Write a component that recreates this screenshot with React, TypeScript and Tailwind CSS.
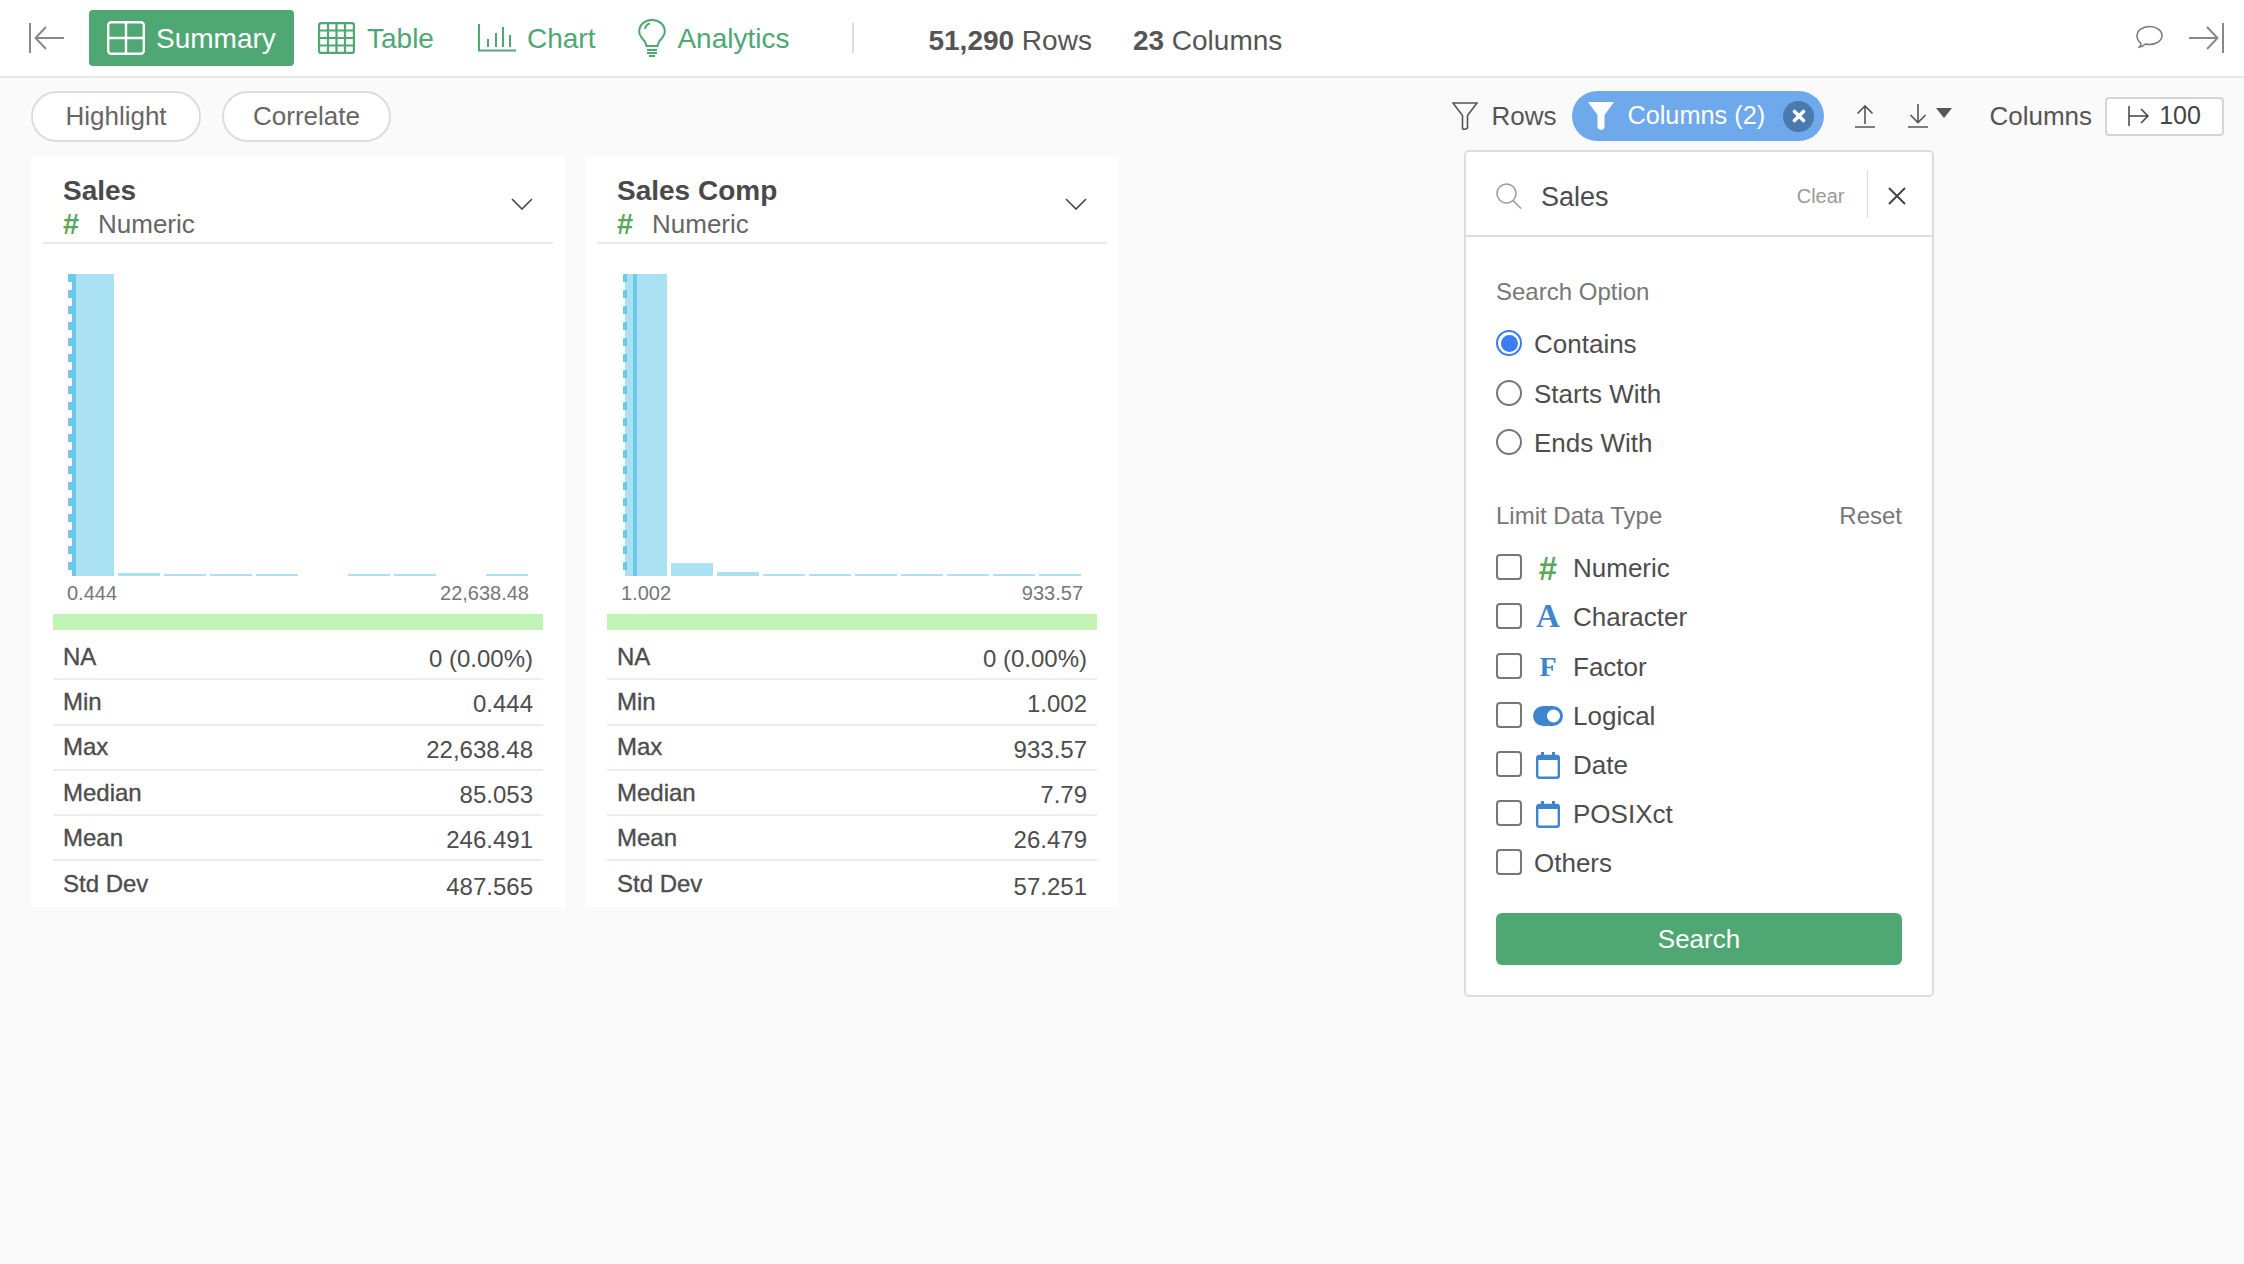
import React from "react";

function Back({ flip = false }: { flip?: boolean }) {
  return (
    <svg width="36" height="32" viewBox="0 0 36 32" fill="none" stroke="#888" strokeWidth="2" className={flip ? "-scale-x-100" : ""}>
      <path d="M1 1v30" />
      <path d="M35 16H7M17 5 6.500 16 17 27" />
    </svg>
  );
}

function Hist({ bars, solid, dash, x0 }: { bars: number[]; solid: number; dash: number; x0: number }) {
  return (
    <svg width="534" height="302" viewBox="0 0 534 302" className="block mt-[30px]">
      {bars.map((h, i) =>
        h > 0 ? <rect key={i} x={x0 + i * 46} y={302 - h} width="42" height={h} fill="#aae2f4" /> : null
      )}
      <rect x={solid} y="0" width="4" height="302" fill="#6cc9ec" />
      <line x1={dash} y1="0" x2={dash} y2="302" stroke="#6cc9ec" strokeWidth="4" strokeDasharray="8 8" />
    </svg>
  );
}

function Card({
  title,
  min,
  max,
  bars,
  solid,
  dash,
  x0,
  stats,
}: {
  title: string;
  min: string;
  max: string;
  bars: number[];
  solid: number;
  dash: number;
  x0: number;
  stats: [string, string][];
}) {
  return (
    <div className="w-[534px] h-[751px] bg-white">
      <div className="relative mx-[12px] pl-[20px] pt-[17px] h-[88px] border-b-2 border-[#e9e9e9]">
        <div className="text-[28px] leading-[36px] font-bold text-[#4a4a4a]">{title}</div>
        <div className="flex items-center h-[31px] text-[26px] text-[#666]">
          <span className="w-[35px] font-bold text-[29px] text-[#5ba85a]">#</span>
          <span>Numeric</span>
        </div>
        <svg width="22" height="12" viewBox="0 0 22 12" fill="none" stroke="#444" strokeWidth="1.600" className="absolute right-[20px] top-[42px]">
          <path d="M1 1l10 10L21 1" />
        </svg>
      </div>
      <Hist bars={bars} solid={solid} dash={dash} x0={x0} />
      <div className="flex justify-between pl-[36px] pr-[36px] mt-[5px] text-[20px] leading-[24px] text-[#777]">
        <span>{min}</span>
        <span>{max}</span>
      </div>
      <div className="mt-[9px] mx-[22px] h-[16px] bg-[#c1f4b5]" />
      <div className="mt-[5px] mx-[22px]">
        {stats.map(([k, v], i) => (
          <div
            key={k}
            className={
              i < 5
                ? "flex justify-between items-center h-[45.3px] px-[10px] border-b-2 border-[#ededed] text-[24px] text-[#4d4d4d]"
                : "flex justify-between items-center h-[45.3px] px-[10px] text-[24px] text-[#4d4d4d]"
            }
          >
            <span className="[-webkit-text-stroke:0.35px_#4d4d4d]">{k}</span>
            <span className="pt-[5px]">{v}</span>
          </div>
        ))}
      </div>
    </div>
  );
}

function Radio({ label, on = false }: { label: string; on?: boolean }) {
  return (
    <div className="flex items-center h-[49.4px]">
      {on ? (
        <span className="flex items-center justify-center w-[26px] h-[26px] rounded-full border-2 border-[#3b7cf0] mb-[3px]">
          <span className="w-[17px] h-[17px] rounded-full bg-[#3b7cf0]" />
        </span>
      ) : (
        <span className="w-[26px] h-[26px] rounded-full border-2 border-[#777] mb-[3px]" />
      )}
      <span className="ml-[12px] text-[26px] text-[#4d4d4d]">{label}</span>
    </div>
  );
}

function Calendar() {
  return (
    <svg width="24" height="28" viewBox="0 0 24 28" fill="none" className="mb-[1px]">
      <rect x="1.200" y="5" width="21.600" height="21.800" rx="2" stroke="#3d85cc" strokeWidth="2.400" />
      <rect x="1.200" y="5" width="21.600" height="4" fill="#3d85cc" />
      <rect x="5" y="1" width="3" height="5" fill="#3d85cc" />
      <rect x="16" y="1" width="3" height="5" fill="#3d85cc" />
    </svg>
  );
}

function Check({ label, icon }: { label: string; icon?: React.ReactNode }) {
  return (
    <div className="flex items-center h-[49.2px]">
      <span className="w-[26px] h-[26px] rounded-[4px] border-2 border-[#777] mb-[3px]" />
      {icon ? (
        <span className="flex items-center justify-center w-[30px] ml-[11px] mr-[10px] h-[30px]">{icon}</span>
      ) : (
        <span className="w-[12px]" />
      )}
      <span className="text-[26px] text-[#4d4d4d]">{label}</span>
    </div>
  );
}

const serifIcon = "[font-family:'Liberation_Serif',serif] font-bold leading-none";

export default function App() {
  return (
    <div className="relative w-[2244px] h-[1264px] overflow-hidden bg-[#fafafa] [font-family:'Liberation_Sans',Arial,sans-serif]">
      {/* top bar */}
      <div className="flex items-center h-[78px] bg-white border-b-2 border-[#e8e8e8] pl-[29px] pr-[20px]">
        <Back />
        <div className="ml-[24px] flex items-center w-[205px] h-[56px] rounded-[4px] bg-[#4fa774] pl-[18px] text-white text-[28px]">
          <svg width="38" height="34" viewBox="0 0 38 34" fill="none" stroke="#fff" strokeWidth="2.400">
            <rect x="1.200" y="1.200" width="35.600" height="31.600" rx="3" />
            <path d="M19 1v32M1 17h36" />
          </svg>
          <span className="ml-[11px] mt-[2px]">Summary</span>
        </div>
        <div className="ml-[24px] flex items-center text-[28px] text-[#4fa774]">
          <svg width="37" height="32" viewBox="0 0 37 32" fill="none" stroke="#4fa774" strokeWidth="2.200">
            <rect x="1.100" y="1.100" width="34.800" height="29.800" rx="2" />
            <path d="M1 8.500h35M1 16h35M1 23.500h35M10 1v30M18.500 1v30M27 1v30" />
          </svg>
          <span className="ml-[12px] mt-[2px]">Table</span>
        </div>
        <div className="ml-[44px] flex items-center text-[28px] text-[#4fa774]">
          <svg width="38" height="28" viewBox="0 0 38 28" fill="none" stroke="#4fa774" strokeWidth="2">
            <path d="M1 0v26.500h37" />
            <path d="M10 15v8M18 9v14M25 3v20M32 11v12" />
          </svg>
          <span className="ml-[11px] mt-[2px]">Chart</span>
        </div>
        <div className="ml-[43px] flex items-center text-[28px] text-[#4fa774]">
          <svg width="28" height="38" viewBox="0 0 28 38" fill="none" stroke="#4fa774" strokeWidth="2">
            <path d="M8.500 27C8 21 1.200 19 1.200 12.500 1.200 5.500 7 1 14 1s12.800 4.500 12.800 11.500C26.800 19 20 21 19.500 27z" />
            <path d="M7 10c.5-3 2.500-5 5-5.500" />
            <path d="M9 31h10M9 34h10M11 37h6" />
          </svg>
          <span className="ml-[11px] mt-[2px]">Analytics</span>
        </div>
        <div className="ml-[63px] w-[2px] h-[30px] bg-[#ddd]" />
        <div className="ml-[74px] mt-[6px] text-[28px] text-[#555]">
          <b>51,290</b> Rows
        </div>
        <div className="ml-[41px] mt-[6px] text-[28px] text-[#555]">
          <b>23</b> Columns
        </div>
        <div className="ml-auto flex items-center gap-[25px]">
          <svg width="27" height="24" viewBox="0 0 27 24" fill="none" stroke="#777" strokeWidth="1.500" className="mt-[-2px]">
            <path d="M5 18.500C2.500 16.500 1 14 1 11 1 5.500 6.500 1.500 13.500 1.500S26 5.500 26 10.500 20.500 19.500 13.500 19.500c-1.500 0-3-.2-4-.5-1.500 1.500-3.500 2.500-6 3 1-1 1.500-2.500 1.500-3.500z" />
          </svg>
          <Back flip />
        </div>
      </div>

      {/* toolbar */}
      <div className="flex items-center justify-between h-[76px] pl-[31px] pr-[20px]">
        <div className="flex items-center gap-[21px]">
          <div className="flex items-center justify-center w-[170px] h-[51px] rounded-full border-2 border-[#ddd] bg-white text-[26px] text-[#666]">Highlight</div>
          <div className="flex items-center justify-center w-[169px] h-[51px] rounded-full border-2 border-[#ddd] bg-white text-[26px] text-[#666]">Correlate</div>
        </div>
        <div className="flex items-center">
          <svg width="26" height="28" viewBox="0 0 26 28" fill="none" stroke="#555" strokeWidth="1.600">
            <path d="M1 1h24l-9.500 12.500V26l-2 1.200h-2.500L10.500 26V13.500z" />
          </svg>
          <span className="ml-[13px] text-[26px] text-[#555]">Rows</span>
          <div className="ml-[16px] flex items-center w-[252px] h-[50px] rounded-full bg-[#6ea9ec] pl-[16px] pr-[10px] text-white text-[25.300px]">
            <svg width="26" height="28" viewBox="0 0 26 28" fill="#fff">
              <path d="M0 0h26L16.500 13V26l-2.500 2h-1.500L9.500 26V13z" />
            </svg>
            <span className="ml-[13px]">Columns (2)</span>
            <span className="ml-auto flex items-center justify-center w-[31px] h-[31px] rounded-full bg-[#4a79ae]">
              <svg width="14" height="14" viewBox="0 0 14 14" stroke="#fff" strokeWidth="3.600" strokeLinecap="round">
                <path d="M2.500 2.500l9 9M11.500 2.500l-9 9" />
              </svg>
            </span>
          </div>
          <svg width="20" height="24" viewBox="0 0 20 24" fill="none" stroke="#555" strokeWidth="1.600" className="ml-[31px]">
            <path d="M10 20V2M2.500 9.500 10 2l7.500 7.500M0 23h20" />
          </svg>
          <svg width="20" height="24" viewBox="0 0 20 24" fill="none" stroke="#555" strokeWidth="1.600" className="ml-[33px]">
            <path d="M10 0v18M2.500 11 10 18.500 17.500 11M0 23h20" />
          </svg>
          <svg width="16" height="10" viewBox="0 0 16 10" fill="#555" className="ml-[8px] mb-[6px]">
            <path d="M0 0h16L8 10z" />
          </svg>
          <span className="ml-[37px] text-[26px] text-[#555]">Columns</span>
          <div className="ml-[13px] flex items-center justify-center w-[119px] h-[39px] rounded-[4px] border-2 border-[#d5d5d5] bg-white text-[25px] text-[#444]">
            <svg width="22" height="20" viewBox="0 0 22 20" fill="none" stroke="#444" strokeWidth="1.500" className="mr-[9px]">
              <path d="M1 0v20M1 10h19M13 3l7 7-7 7" />
            </svg>
            100
          </div>
        </div>
      </div>

      {/* cards */}
      <div className="flex gap-[20px] pl-[31px] pt-[2px]">
        <Card
          title="Sales"
          min="0.444"
          max="22,638.48"
          bars={[302, 3, 2, 2, 2, 0, 2, 2, 0, 2]}
          solid={41}
          dash={39}
          x0={41}
          stats={[
            ["NA", "0 (0.00%)"],
            ["Min", "0.444"],
            ["Max", "22,638.48"],
            ["Median", "85.053"],
            ["Mean", "246.491"],
            ["Std Dev", "487.565"],
          ]}
        />
        <Card
          title="Sales Comp"
          min="1.002"
          max="933.57"
          bars={[302, 13, 4, 2, 2, 2, 2, 2, 2, 2]}
          solid={48}
          dash={40}
          x0={40}
          stats={[
            ["NA", "0 (0.00%)"],
            ["Min", "1.002"],
            ["Max", "933.57"],
            ["Median", "7.79"],
            ["Mean", "26.479"],
            ["Std Dev", "57.251"],
          ]}
        />
      </div>

      {/* search popover */}
      <div className="absolute left-[1464px] top-[150px] w-[470px] h-[847px] rounded-[5px] border-2 border-[#ddd] bg-white">
        <div className="flex items-center h-[85px] border-b-2 border-[#ddd] pl-[30px] pt-[4px]">
          <svg width="26" height="26" viewBox="0 0 26 26" fill="none" stroke="#999" strokeWidth="1.500">
            <circle cx="10.500" cy="10.500" r="9.500" />
            <path d="M17 17.500l8 8" />
          </svg>
          <span className="ml-[19px] mt-[3px] text-[27px] text-[#4d4d4d]">Sales</span>
          <span className="ml-auto text-[20px] text-[#999]">Clear</span>
          <span className="ml-[22px] w-[1.500px] h-[48px] bg-[#ddd] mb-[4px]" />
          <svg width="18" height="18" viewBox="0 0 18 18" stroke="#444" strokeWidth="2" className="ml-[20px] mr-[26px]">
            <path d="M1 1l16 16M17 1 1 17" />
          </svg>
        </div>
        <div className="px-[30px] pt-[40px]">
          <div className="text-[24px] leading-[30px] text-[#777]">Search Option</div>
          <div className="mt-[13px]">
            <Radio label="Contains" on />
            <Radio label="Starts With" />
            <Radio label="Ends With" />
          </div>
          <div className="mt-[33px] flex justify-between text-[24px] leading-[30px] text-[#777]">
            <span>Limit Data Type</span>
            <span>Reset</span>
          </div>
          <div className="mt-[13px]">
            <Check label="Numeric" icon={<span className="font-bold leading-none text-[33px] text-[#5ba85a]">#</span>} />
            <Check label="Character" icon={<span className={`${serifIcon} text-[33px] text-[#3d85cc] mb-[3px]`}>A</span>} />
            <Check label="Factor" icon={<span className={`${serifIcon} text-[28px] text-[#3d85cc]`}>F</span>} />
            <Check
              label="Logical"
              icon={
                <svg width="30" height="20" viewBox="0 0 30 20">
                  <rect width="30" height="20" rx="10" fill="#3d85cc" />
                  <circle cx="20.500" cy="10" r="6.500" fill="#fff" />
                </svg>
              }
            />
            <Check label="Date" icon={<Calendar />} />
            <Check label="POSIXct" icon={<Calendar />} />
            <Check label="Others" />
          </div>
          <div className="mt-[25px] flex items-center justify-center h-[52px] rounded-[6px] bg-[#4fa774] text-white text-[26px]">
            Search
          </div>
        </div>
      </div>
    </div>
  );
}
